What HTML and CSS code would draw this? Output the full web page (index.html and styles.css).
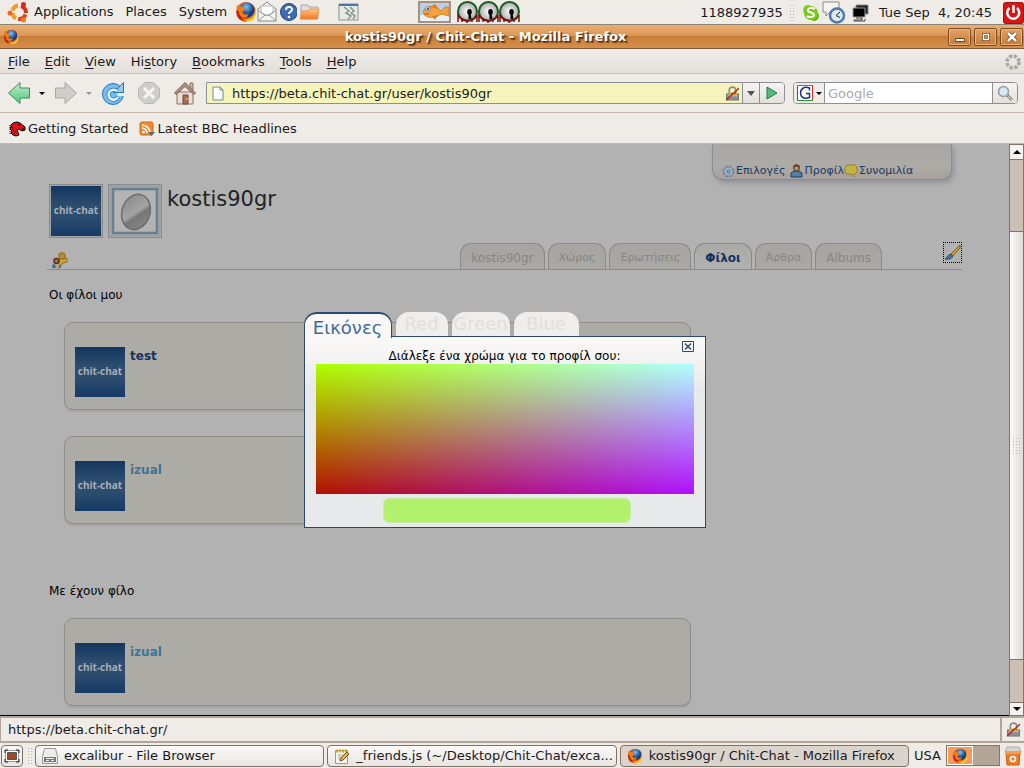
FILE: index.html
```html
<!DOCTYPE html>
<html lang="el">
<head>
<meta charset="utf-8">
<title>kostis90gr / Chit-Chat - Mozilla Firefox</title>
<link rel="stylesheet" href="styles.css">
</head>
<body>
<svg class="defs" aria-hidden="true">
  <defs>
    <radialGradient id="globe" cx="45%" cy="30%"><stop offset="0" stop-color="#7cc5f4"/><stop offset="1" stop-color="#123c85"/></radialGradient>
    <linearGradient id="fox" x1="0" y1="0" x2="1" y2="1"><stop offset="0" stop-color="#ef7a18"/><stop offset=".5" stop-color="#c8250b"/><stop offset="1" stop-color="#ffcc22"/></linearGradient>
    <linearGradient id="green" x1="0" y1="0" x2="0" y2="1"><stop offset="0" stop-color="#c4f0cf"/><stop offset="1" stop-color="#4fc57a"/></linearGradient>
    <linearGradient id="orange" x1="0" y1="0" x2="0" y2="1"><stop offset="0" stop-color="#ffc98c"/><stop offset="1" stop-color="#ef7417"/></linearGradient>
    <linearGradient id="mirror" x1="0" y1="0" x2="1" y2="1"><stop offset="0" stop-color="#858585"/><stop offset=".5" stop-color="#a4a4a4"/><stop offset=".6" stop-color="#777"/><stop offset="1" stop-color="#8d8d8d"/></linearGradient>
    <radialGradient id="eyeball"><stop offset="0" stop-color="#fff"/><stop offset="1" stop-color="#aaa"/></radialGradient>
  </defs>
  <symbol id="firefox" viewBox="0 0 22 22">
    <circle cx="11" cy="11" r="10" fill="url(#fox)"/>
    <circle cx="12" cy="9" r="7.500" fill="url(#globe)"/>
    <path d="M1.500 6 3 3.500 4.500 5.500 8 5.500 10 8.500 7.500 10.500 8.500 13 12 13.500 14 12 12 16 7 16.500 3 13z" fill="#ee7d17"/>
    <path d="M18 3C21 6 21 13 18 16c-3 3-8 4-12 1 3 4 10 5 13 1 3-4 3-11-1-15z" fill="#ffd02b"/>
    <path d="M2 9c0 6 4 11 10 11-5-1-8-5-8-9z" fill="#b61b0d"/>
  </symbol>
  <symbol id="lock" viewBox="0 0 14 14">
    <path d="M4 7V4a3 3 0 0 1 6 0v3" fill="none" stroke="#8b8b8b" stroke-width="1.500"/>
    <path d="M1.500 7.500h11v5.500h-11z" fill="#a3a6aa" stroke="#6c6f73"/>
    <path d="M4 6h7v3H4z" fill="#d8b93c"/><path d="M6 7h1m2 0h1" stroke="#222"/><path d="M2 10.500h10M2 12h10" stroke="#777b80" stroke-width=".7"/>
    <path d="M1 13 13 2" stroke="#bd1d1d" stroke-width="1.300"/>
  </symbol>
  <symbol id="eye" viewBox="0 0 21 22">
    <ellipse cx="10.500" cy="10.500" rx="9.500" ry="9.500" fill="url(#eyeball)" stroke="#1c5a24" stroke-width="2"/>
    <path d="M1 21v-7c3 5 6 5.500 9.500 5.500S18 18 20 14v7M5 17v4M10 19v3M15 18v3" fill="none" stroke="#7c1010" stroke-width="1.500"/>
    <ellipse cx="12.500" cy="11" rx="2.300" ry="3" fill="#000"/><path d="M11.500 12h2l1 6h-3z" fill="#000"/>
  </symbol>
</svg>

<nav class="panel" aria-label="Desktop">
  <svg class="ubuntu" viewBox="0 0 22 22" width="22" height="22">
    <g fill="none" stroke-width="4"><path d="M5.500 9.500A7 7 0 0 1 11 4.500" stroke="#f29b30"/><path d="M14 5a7 7 0 0 1 5 7" stroke="#d63218"/><path d="M18.500 13.500A7 7 0 0 1 11 18" stroke="#e2421c"/><path d="M9 17.500A7 7 0 0 1 5.500 12" stroke="#f4a02c"/></g>
    <circle cx="3" cy="12" r="2.500" fill="#ef6a1c"/><circle cx="16.500" cy="3.500" r="2.500" fill="#d62d1a"/><circle cx="16.500" cy="19" r="2.500" fill="#f07c20"/>
  </svg>
  <a href="#">Applications</a><a href="#">Places</a><a href="#">System</a>
  <div class="launchers">
    <svg width="22" height="22"><use href="#firefox"/></svg>
    <svg viewBox="0 0 20 22" width="20" height="22"><path d="M1 8 10 1l9 7v12H1z" fill="#f4f4f2" stroke="#888"/><path d="M4 5h12v7l-6 3-6-3z" fill="#fff" stroke="#bbb"/><path d="m1 20 7-6h4l7 6M1 9l7 5M19 9l-7 5" fill="none" stroke="#999"/></svg>
    <svg viewBox="0 0 20 20" width="20" height="20"><circle cx="12" cy="10" r="8.500" fill="#3d6db0" stroke="#25457d"/><path d="M9 8c0-4 6-4 6-.500 0 2-3 2-3 4.500" fill="none" stroke="#fff" stroke-width="2"/><circle cx="12" cy="15" r="1.300" fill="#fff"/></svg>
    <svg viewBox="0 0 24 20" width="24" height="20"><path d="M4 17V3h7l1 2h9v12z" fill="#ddd" stroke="#aaa"/><path d="M3 17 5 9h6l2-2h9l-2 10z" fill="url(#orange)" stroke="#e9964f"/></svg>
  </div>
  <svg class="torn" viewBox="0 0 21 18" width="21" height="18"><path d="M1 1h19v16H1z" fill="#e7ebe6" stroke="#8a918d"/><path d="M1 1h19v2H1z" fill="#4b76a8"/><path d="m6 4 5 4-3 2 5 3-3 3M12 4l4 4-3 2 4 3-2 3" fill="none" stroke="#8b8f8d" stroke-width="1.500"/></svg>
  <svg class="fish" viewBox="0 0 33 22" width="33" height="22"><path d="M1 1h31v20H1z" fill="#b8cff0" stroke="#a6937f" stroke-width="2"/><path d="M2 14h29v6H2z" fill="#e9f1fa"/><path d="M5 11c2-7 12-7 18-1l4-4h4l-1 4 1 5-8-2c-4 4-16 6-18-2z" fill="#f3a33d" stroke="#d98434"/><path d="m12 6 5-3 4 5zm2 9 3 4 3-5z" fill="#e57c22"/><circle cx="10" cy="8" r="2.300" fill="#fff" stroke="#777"/><circle cx="10" cy="8" r="1" fill="#222"/><path d="M6 13h5" stroke="#a55416"/></svg>
  <div class="eyes"><svg width="21" height="22"><use href="#eye"/></svg><svg width="21" height="22"><use href="#eye"/></svg><svg width="21" height="22"><use href="#eye"/></svg></div>
  <div class="tray">
    <span>1188927935</span><i class="grip"></i>
    <svg class="skype" viewBox="0 0 18 18" width="18" height="18"><circle cx="6" cy="6" r="5" fill="#83d01b"/><circle cx="12" cy="12" r="5" fill="#62b90c"/><circle cx="9" cy="9" r="7" fill="#78ca15"/><path d="M13 5c-3-2-8-1-7 2 1 2 6 1 6 4 0 2-5 3-7 1" fill="none" stroke="#fff" stroke-width="2"/></svg>
    <svg viewBox="0 0 24 23" width="24" height="23"><path d="M1 1h16v10H8l-4 4v-4H1z" fill="#f4f4f2" stroke="#888"/><circle cx="15" cy="14.500" r="7" fill="#dce9f7" stroke="#5377a8" stroke-width="2.500"/><path d="m18 11-4 3.500 4 2" fill="none" stroke="#222"/></svg>
    <svg class="screens" viewBox="0 0 17 18" width="17" height="18"><path d="M4 1h12v9H4z" fill="#222" stroke="#888"/><path d="M1 4h12v9H1z" fill="#000" stroke="#999"/><path d="M4 14h6v2H2v1h11v-2" stroke="#444" fill="none"/></svg>
    <span class="clock">Tue Sep&nbsp; 4, 20:45</span>
    <svg viewBox="0 0 21 22" width="21" height="22"><rect x=".5" y=".5" width="20" height="21" rx="2" fill="#d71515" stroke="#9c1414"/><path d="M6.500 6a6 6 0 1 0 7.500 0M10.500 3v8" fill="none" stroke="#fff" stroke-width="2.500"/></svg>
  </div>
</nav>

<header class="titlebar">
  <svg width="16" height="16"><use href="#firefox"/></svg>
  <h1>kostis90gr / Chit-Chat - Mozilla Firefox</h1>
  <div class="winbuttons">
    <button aria-label="Minimize"><svg viewBox="0 0 12 12" width="12" height="12"><path d="M1.500 7.500h9v3h-9z" fill="#fff" stroke="#713f16"/></svg></button>
    <button aria-label="Maximize"><svg viewBox="0 0 12 12" width="12" height="12"><path d="M3.500 3.500h5v5h-5z" fill="none" stroke="#713f16" stroke-width="3"/><path d="M3.500 3.500h5v5h-5z" fill="none" stroke="#fff" stroke-width="1.500"/></svg></button>
    <button aria-label="Close"><svg viewBox="0 0 12 12" width="12" height="12"><path d="m2 2 8 8m0-8-8 8" stroke="#713f16" stroke-width="4"/><path d="m2 2 8 8m0-8-8 8" stroke="#fff" stroke-width="2.500"/></svg></button>
  </div>
</header>

<nav class="menubar" aria-label="Menu">
  <a href="#"><u>F</u>ile</a><a href="#"><u>E</u>dit</a><a href="#"><u>V</u>iew</a><a href="#">Hi<u>s</u>tory</a><a href="#"><u>B</u>ookmarks</a><a href="#"><u>T</u>ools</a><a href="#"><u>H</u>elp</a>
  <svg class="throbber" viewBox="0 0 16 16" width="16" height="16"><circle cx="8" cy="8" r="6" fill="none" stroke="#aaa6a2" stroke-width="3.500" stroke-dasharray="3.200 1.512"/></svg>
</nav>

<div class="navbar">
  <button class="plain" aria-label="Back"><svg viewBox="0 0 24 24" width="24" height="24"><path d="M1.500 12 13 1.500V7h9.500v10H13v5.500z" fill="url(#green)" stroke="#3a8f5c"/></svg></button>
  <i class="caret"></i>
  <button class="plain fwd" aria-label="Forward"><svg viewBox="0 0 24 24" width="24" height="24"><path d="M22.500 12 11 1.500V7H1.500v10H11v5.500z" fill="#cfcdca" stroke="#aaa8a5"/></svg></button>
  <i class="caret dim"></i>
  <button class="plain reload" aria-label="Reload"><svg viewBox="0 0 24 24" width="24" height="24"><circle cx="12" cy="13" r="10.500" fill="#74bdf0" stroke="#2876b8"/><path d="M22.500 1.500v10H12.500z" fill="#8fcbf4" stroke="#2876b8"/><path d="M23 12h-7l1 3h6z" fill="#efebe7"/><path d="M16 10a5 5 0 1 0 1 6" fill="none" stroke="#2876b8" stroke-width="4"/><path d="M16 10a5 5 0 1 0 1 6" fill="none" stroke="#e6f4fd" stroke-width="2.500"/></svg></button>
  <button class="plain stop" aria-label="Stop"><svg viewBox="0 0 24 24" width="24" height="24"><path d="M7.500 1.500h9l6 6v9l-6 6h-9l-6-6v-9z" fill="#cfcdca" stroke="#b9b7b4"/><path d="m7 7 10 10m0-10L7 17" stroke="#f7f6f4" stroke-width="3"/></svg></button>
  <button class="plain home" aria-label="Home"><svg viewBox="0 0 24 24" width="24" height="24"><path d="M4 11h16v12H4z" fill="#ece0d6" stroke="#8a7363"/><path d="M17 2h3v7h-3z" fill="#c9b8ab" stroke="#8a7363"/><path d="M12 1.500 1.500 12l1.500 1.500 9-8 9 8 1.500-1.500z" fill="#b78f7e" stroke="#805e50"/><path d="M10 14h5v9h-5z" fill="#a9705c" stroke="#744636"/><circle cx="14" cy="18" r="1" fill="#e9c64d"/></svg></button>
  <form class="location">
    <svg viewBox="0 0 12 15" width="12" height="15"><path d="M1 1h7l3 3v10H1z" fill="#fff" stroke="#7486a0"/><path d="M8 1v3h3" fill="none" stroke="#7486a0"/></svg>
    <input type="text" aria-label="Location" value="https://beta.chit-chat.gr/user/kostis90gr">
    <svg width="15" height="15"><use href="#lock"/></svg>
    <button type="button" class="cell drop" aria-label="History list"><i class="caret grey"></i></button>
    <button type="button" class="cell go" aria-label="Go"><svg viewBox="0 0 14 14" width="14" height="14"><path d="M2 1v12l10-6z" fill="#55bd78" stroke="#24774a"/></svg></button>
  </form>
  <form class="search">
    <button type="button" class="engine" aria-label="Search engine"><svg viewBox="0 0 16 16" width="16" height="16"><path d="M0 0h16v16H0z" fill="#fff"/><path d="M.5 16V.5" stroke="#2a56c6"/><path d="M0 .5h16M0 15.500h16" stroke="#2a9b35"/><path d="M15.500 1v14" stroke="#d7291d"/><path d="M12.500 5.500V3C7 1 3.500 4 3.500 8s3 6.500 9 4.500V8.500H9" fill="none" stroke="#17328d" stroke-width="1.500"/></svg><i class="caret"></i></button>
    <input type="text" aria-label="Search" placeholder="Google">
    <button type="button" class="cell find" aria-label="Search"><svg viewBox="0 0 17 17" width="17" height="17"><path d="m9 9 6 6" stroke="#888" stroke-width="3"/><path d="m10 10 5 5" stroke="#ddd"/><circle cx="6.500" cy="6.500" r="5" fill="#d4e8f6" stroke="#999" stroke-width="1.500"/></svg></button>
  </form>
</div>

<nav class="bookmarks" aria-label="Bookmarks">
  <a href="#"><svg viewBox="0 0 17 16" width="17" height="16"><path d="m2 4 2-2 4-1 3 1 5 4v3l-3 1-3-2-2 1 2 5-3 1-3-1-2-2 1-2-2-2 1-2z" fill="#e01414" stroke="#000"/><path d="M1 4v9M3 6l3 6" stroke="#000" stroke-dasharray="1 1"/><path d="M9 4h2M13 8h2" stroke="#000"/></svg>Getting Started</a>
  <a href="#"><svg viewBox="0 0 17 16" width="17" height="16"><rect x="1" y="1" width="13" height="13" rx="2" fill="#ee8c32" stroke="#cf6b19"/><circle cx="4.500" cy="11" r="1.300" fill="#fff"/><path d="M3 7a5 5 0 0 1 5 5M3 4a8 8 0 0 1 8 8" fill="none" stroke="#fff" stroke-width="1.500"/><path d="M9 11h7l-3.500 4z" fill="#666"/></svg>Latest BBC Headlines</a>
</nav>

<div class="viewport">
  <main class="page">
    <nav class="usermenu" aria-label="Χρήστης">
      <a href="#"><svg viewBox="0 0 13 13" width="13" height="13"><circle cx="6.500" cy="6.500" r="5.500" fill="#93a9bf" stroke="#5b7591" stroke-dasharray="2.600 1.720"/><circle cx="6.500" cy="6.500" r="4.500" fill="#9fb2c4" stroke="#6f89a4"/><circle cx="6.500" cy="6.500" r="1.500" fill="#aaa" stroke="#4c6a8c"/></svg>Επιλογές</a>
      <a href="#"><svg viewBox="0 0 13 14" width="13" height="14"><path d="M1 13V9l3-2h5l3 2v4z" fill="#537fa8" stroke="#1f4267"/><circle cx="6.500" cy="4" r="3" fill="#b49068" stroke="#5b3218"/><path d="M3 4c0-5 7-5 7 0-2-2-5-2-7 0z" fill="#6b3a19"/></svg>Προφίλ</a>
      <a href="#"><svg viewBox="0 0 14 14" width="14" height="14"><path d="M3 1h8l2 2v5l-2 2h-1v3L7 10H3L1 8V3z" fill="#c3b344" stroke="#9a7f22"/></svg>Συνομιλία</a>
    </nav>
    <header class="profile">
      <span class="frame"><span class="avatar">chit-chat</span></span>
      <span class="frame"><svg viewBox="0 0 50 50" width="50" height="50"><path d="M0 0h50v50H0z" fill="#97a0a6"/><path d="M2 2h46v46H2z" fill="#6d7f8b"/><path d="M4 4h42v42H4z" fill="#98a5ae"/><path d="M5 5h40v40H5z" fill="#b3b3b3"/><ellipse cx="26" cy="26" rx="14" ry="18" transform="rotate(18 26 26)" fill="url(#mirror)" stroke="#6c6c6c" stroke-width="1.500"/></svg></span>
      <h2>kostis90gr</h2>
    </header>
    <div class="tabrow">
      <svg class="friendsicon" viewBox="0 0 17 17" width="17" height="17"><circle cx="11" cy="4" r="3" fill="#b08f50" stroke="#a77412" stroke-width="1.500"/><path d="M6 9l3-2h4l3-1v4l-4 1-4 5H6z" fill="#c9a436" stroke="#94702a"/><circle cx="5.500" cy="9" r="2.500" fill="#9e7754" stroke="#553217" stroke-width="1.500"/><path d="M1 16v-3l3-1h3l3 1v3z" fill="#3d719f"/><path d="M4 12h4v4H5z" fill="#b8a37d"/></svg>
      <nav class="tabs" aria-label="Προφίλ">
        <a href="#">kostis90gr</a><a href="#">Χώρος</a><a href="#">Ερωτήσεις</a><a href="#" class="current">Φίλοι</a><a href="#">Άρθρα</a><a href="#">Albums</a>
      </nav>
      <button class="brush" aria-label="Χρώματα"><svg viewBox="0 0 17 19" width="17" height="19"><path d="m7 11 9-9v3l-7 8z" fill="#c5a044" stroke="#80601f"/><path d="M1 16c2-1 2-4 6-5l2 2c-1 3-5 4-8 3z" fill="#4d6f92" stroke="#3a5572"/></svg></button>
    </div>
    <section>
      <h3>Οι φίλοι μου</h3>
      <article class="card"><span class="avatar">chit-chat</span><a class="strong" href="#">test</a></article>
      <article class="card"><span class="avatar">chit-chat</span><a href="#">izual</a></article>
    </section>
    <section class="followers">
      <h3>Με έχουν φίλο</h3>
      <article class="card"><span class="avatar">chit-chat</span><a href="#">izual</a></article>
    </section>

    <div class="overlay">
      <div class="dialog" role="dialog" aria-label="Χρώμα προφίλ">
        <div class="dtabs">
          <button class="on">Εικόνες</button><button class="red">Red</button><button class="green">Green</button><button class="blue">Blue</button>
        </div>
        <div class="dbody">
          <button class="close" aria-label="Κλείσιμο"><svg viewBox="0 0 12 11" width="12" height="11"><path d="M.5.5h11v10H.5z" fill="#fff" stroke="#2c4a70"/><path d="m3 2.500 6 6m0-6-6 6" stroke="#2c4a70" stroke-width="1.500"/></svg></button>
          <p>Διάλεξε ένα χρώμα για το προφίλ σου:</p>
          <div class="picker"></div>
          <div class="swatch"></div>
        </div>
      </div>
    </div>
  </main>
  <div class="scrollbar" aria-hidden="true">
    <span class="arrow"><i class="caret up"></i></span>
    <span class="track upper"></span>
    <span class="thumb"><i class="grip"></i></span>
    <span class="track lower"></span>
    <span class="arrow last"><i class="caret down"></i></span>
  </div>
</div>

<footer class="status"><span class="link">https://beta.chit-chat.gr/</span><span class="secure"><svg width="15" height="15"><use href="#lock"/></svg></span></footer>

<nav class="taskbar" aria-label="Tasks">
  <button class="desk" aria-label="Show desktop"><svg viewBox="0 0 16 14" width="16" height="14"><path d="M1.500 1.500h13v11h-13z" fill="#fff" stroke="#999"/><path d="M1 4V1h3M12 1h3v3M15 10v3h-3M4 13H1v-3" fill="none" stroke="#222"/><path d="M3.500 3.500h9v7h-9z" fill="#9b4a25" stroke="#555"/></svg></button>
  <i class="grip"></i>
  <button class="task"><svg viewBox="0 0 16 16" width="16" height="16"><path d="M2.500.5h11l2 8v7H.5v-7z" fill="#ececea" stroke="#999"/><path d="M2 9h12v5H2z" fill="#777"/><path d="M4 10.500h8M4 12.500h3m2 0h3" stroke="#eee"/></svg><span>excalibur - File Browser</span></button>
  <button class="task"><svg viewBox="0 0 16 16" width="16" height="16"><path d="M1.500 2.500h12v13h-12z" fill="#f5f5ee" stroke="#999"/><path d="M2 3h11" stroke="#d1a70d" stroke-width="3" stroke-dasharray="2 1"/><path d="M4 7h7M4 9h5M4 11h4" stroke="#aaa"/><path d="m6 13 1-3 6-6 2 2-6 6z" fill="#efae42" stroke="#7c5424"/></svg><span>_friends.js (~/Desktop/Chit-Chat/exca...</span></button>
  <button class="task active"><svg width="16" height="16"><use href="#firefox"/></svg><span>kostis90gr / Chit-Chat - Mozilla Firefox</span></button>
  <span class="layout">USA</span>
  <div class="spaces"><span class="space here"><svg width="16" height="16"><use href="#firefox"/></svg></span><span class="space"></span></div>
  <svg class="trash" viewBox="0 0 18 20" width="18" height="20"><path d="M2 6h14l-1 13H3z" fill="#ee7b2b" stroke="#c95a16"/><path d="M3 1h12l2 5H1z" fill="#d7d4cf" stroke="#aaa"/><path d="M1 5h16v3H1z" fill="#f39a55"/><circle cx="9" cy="13" r="2.500" fill="none" stroke="#fff" stroke-width="1.500"/></svg>
</nav>
</body>
</html>
```

FILE: styles.css
```css
* { box-sizing: border-box; }
body {
  margin: 0;
  height: 100vh;
  display: flex;
  flex-direction: column;
  overflow: hidden;
  background: #efebe7;
  color: #1a1a1a;
  font: 13px/16px "DejaVu Sans", sans-serif;
}
.defs { position: absolute; width: 0; height: 0; }
svg { display: block; flex: none; }
a { color: inherit; text-decoration: none; }
button, input { font: inherit; color: inherit; padding: 0; margin: 0; border: 0; background: none; }
h1, h2, h3, p { margin: 0; font: inherit; }
form { margin: 0; }

.grip {
  flex: none;
  width: 5px;
  height: 17px;
  background: radial-gradient(circle, #bdb7b0 1px, transparent 1px) 0 0 / 3px 3px;
}
.caret {
  flex: none;
  width: 0;
  height: 0;
  border: 3px solid transparent;
  border-top-color: #000;
  border-bottom: 0;
}
.caret.dim { border-top-color: #999; }
.caret.grey { border-width: 5px 4px 0; border-top-color: #555; }
.caret.down { border-width: 4px 4px 0; }
.caret.up { border: 4px solid transparent; border-bottom-color: #000; border-top: 0; }

/* Desktop panel */
.panel {
  flex: none;
  display: flex;
  align-items: center;
  gap: 12px;
  height: 25px;
  padding-left: 7px;
  border-bottom: 1px solid #8c8478;
}
.panel .ubuntu { margin-right: -7px; }
.launchers { display: flex; align-items: center; margin-left: -4px; }
.torn { margin-left: 5px; }
.fish { margin-left: 47px; }
.eyes { display: flex; margin-left: -6px; }
.tray { display: flex; align-items: center; margin-left: auto; padding-top: 1px; }
.tray .grip { margin: 0 8px 0 6px; }
.tray .skype { margin-right: 2px; }
.tray .screens { margin-left: 6px; }
.clock { margin: 0 11px 0 10px; }

/* Window title */
.titlebar {
  flex: none;
  display: flex;
  align-items: center;
  height: 24px;
  padding: 0 1px 0 3px;
  background: linear-gradient(#e9ae70, #dc9857 45%, #c67e38 50%, #d68f4a);
  border-bottom: 1px solid #7d5a3a;
}
.titlebar h1 {
  flex: 1;
  margin-left: 4px;
  text-align: center;
  font-weight: bold;
  color: #fff;
  text-shadow: 1px 1px 1px #4a2c10, 2px 2px 1px #7a4a20;
}
.winbuttons { display: flex; gap: 3px; }
.winbuttons button {
  display: grid;
  place-items: center;
  width: 23px;
  height: 18px;
  background: linear-gradient(#e2a267, #c67c38);
  border: 1px solid #7a4a20;
  border-radius: 2px;
  box-shadow: inset 0 0 0 1px #e8b482;
}

/* Menus */
.menubar {
  flex: none;
  display: flex;
  align-items: center;
  gap: 15px;
  height: 25px;
  padding: 2px 3px 0 8px;
  background: linear-gradient(#efebe7, #e4dfda);
  border-bottom: 1px solid #c8beb6;
}
.menubar u { text-underline-offset: 2px; }
.throbber { margin-left: auto; }

/* Navigation */
.navbar {
  flex: none;
  display: flex;
  align-items: center;
  height: 39px;
  padding: 0 6px 0 7px;
  border-bottom: 1px solid #c8b8a9;
}
.navbar > .caret { margin-left: 8px; }
.fwd { margin-left: 9px; }
.reload { margin-left: 9px; }
.stop { margin-left: 12px; }
.home { margin-left: 12px; }
.location, .search {
  display: flex;
  align-items: center;
  height: 22px;
  border: 1px solid #8e8e96;
  border-radius: 0 4px 4px 0;
  overflow: hidden;
}
.location { flex: 1; margin-left: 9px; padding-left: 5px; background: #f5f5bb; }
.location input { flex: 1; min-width: 0; margin-left: 8px; padding-top: 2px; }
.cell {
  display: grid;
  place-items: center;
  height: 20px;
  border-left: 1px solid #8e8e96;
  background: linear-gradient(#f6f4f2, #e4dfda);
}
.drop { width: 17px; margin-left: 2px; }
.go { width: 25px; }
.search { width: 225px; margin-left: 8px; background: #fff; border-radius: 4px; }
.engine {
  display: flex;
  align-items: center;
  gap: 3px;
  width: 31px;
  height: 20px;
  padding-left: 3px;
  background: #efebe7;
  border-right: 1px solid #8e8e96;
}
.search input { flex: 1; min-width: 0; padding: 2px 0 0 3px; }
.search input::placeholder { color: #aaa; opacity: 1; }
.find { width: 25px; }

.bookmarks {
  flex: none;
  display: flex;
  align-items: center;
  gap: 10px;
  height: 31px;
  padding: 1px 0 0 9px;
  border-bottom: 1px solid #c0b8b0;
}
.bookmarks a { display: flex; align-items: center; gap: 2px; }

/* Web page */
.viewport { flex: 1; display: flex; min-height: 0; }
.page {
  position: relative;
  flex: 1;
  overflow: hidden;
  padding: 0 47px;
  background: #b2b2b2;
  border-bottom: 1px solid #000;
  font-size: 12px;
}
.usermenu {
  display: flex;
  align-items: flex-end;
  width: 240px;
  height: 36px;
  margin: 0 10px 4px auto;
  padding-left: 9px;
  background: linear-gradient(#a9a7a3, #aeaba7 60%, #a8a19e);
  border: 1px solid #8c8c8c;
  border-top: 0;
  border-radius: 0 0 11px 11px;
  box-shadow: 2px 3px 5px #8f9297;
  color: #173a66;
  font-size: 11px;
}
.usermenu a { display: flex; align-items: center; gap: 1px; }
.usermenu a:nth-child(2) { margin-left: 5px; }
.profile { display: flex; gap: 5px; padding-left: 2px; }
.frame { padding: 1px; border: 1px solid #8b8b8b; background: #a5a5a5; }
.avatar {
  flex: none;
  display: grid;
  place-items: center;
  width: 50px;
  height: 50px;
  padding-bottom: 2px;
  background: linear-gradient(#14355f, #2c4d6e 38%, #2c4d6e 62%, #163a66);
  color: #a7afb8;
  font: bold 10px/16px "Open Sans", sans-serif;
}
.profile .frame { width: 54px; height: 54px; }
.profile h2 { font-size: 21px; line-height: 30px; color: #222; }
.tabrow { display: flex; align-items: flex-end; height: 32px; border-bottom: 1px solid #8c8c8c; }
.friendsicon { margin-left: 4px; }
.tabs { display: flex; gap: 3px; margin-left: auto; }
.tabs a {
  display: flex;
  align-items: center;
  height: 26px;
  padding: 3px 10px 0;
  background: linear-gradient(#a6a5a2, #a9a8a4);
  border: 1px solid #8a8a8a;
  border-bottom: 0;
  border-radius: 11px 11px 0 0;
  color: #868686;
  font-size: 11px;
}
.tabs a:first-child, .tabs a:last-child { font-size: 12px; }
.tabs .current {
  margin-bottom: -1px;
  background: linear-gradient(#aaa9a5, #b2b2b2);
  color: #12325d;
  font-size: 12px;
  font-weight: bold;
}
.brush {
  width: 19px;
  height: 21px;
  margin: 0 0 6px 61px;
  border: 1px dotted #000;
}
.page h3 { padding: 17px 2px 0; color: #000; }
.card {
  display: flex;
  gap: 5px;
  width: 627px;
  height: 88px;
  margin: 19px 0 0 17px;
  padding: 24px 10px 0;
  background: #adaba6;
  border: 1px solid #8d8d8b;
  border-radius: 9px;
  box-shadow: 0 2px 1px #a3a3a3;
  color: #3f7590;
  font-weight: bold;
  line-height: 18px;
}
.card + .card { margin-top: 26px; }
.card .strong { color: #12325d; }
.followers { padding-top: 42px; }

/* Colour chooser */
.overlay { position: absolute; inset: 168px 0 auto; display: flex; justify-content: center; }
.dialog { width: 402px; }
.dtabs { display: flex; gap: 4px; align-items: flex-start; }
.dtabs button {
  height: 24px;
  background: #efeeec;
  border-radius: 13px 13px 0 0;
  color: #dfdfdf;
  font-size: 18px;
  line-height: 24px;
}
.dtabs .on {
  position: relative;
  z-index: 1;
  width: 88px;
  height: 26px;
  margin-bottom: -1px;
  padding-top: 2px;
  background: #f9f8f6;
  border: 1px solid #2c4a70;
  border-top-width: 2px;
  border-bottom: 0;
  color: #416a9c;
}
.dtabs .red { width: 52px; }
.dtabs .green { width: 58px; }
.dtabs .blue { width: 65px; }
.dbody {
  position: relative;
  padding: 12px 11px 4px;
  background: linear-gradient(#fbfaf8, #e8e9ec 28%, #e8e9eb);
  border: 1px solid #2c4a70;
  margin-top: -1px;
}
.close { position: absolute; top: 4px; right: 11px; }
.dbody p { color: #000; text-align: center; line-height: 15px; }
.picker {
  height: 130px;
  background:
    linear-gradient(to right, rgb(176, 0, 0), rgb(176, 0, 255)),
    linear-gradient(rgb(0, 255, 0), rgb(0, 16, 0));
  background-blend-mode: screen;
}
.swatch {
  width: 248px;
  height: 25px;
  margin: 4px auto 0 67px;
  background: #b2f16b;
  border: 1px solid #c6eea0;
  border-radius: 6px;
}

/* Scrollbar */
.scrollbar { flex: none; display: flex; flex-direction: column; width: 15px; border: 1px solid #837468; }
.arrow { flex: none; display: grid; place-items: center; height: 14px; background: #f5f2ef; }
.arrow.last { height: 12px; }
.track { background: #cdbfb4; border: solid #837468; border-width: 1px 0; }
.upper { flex: 0 0 73px; }
.lower { flex: 0 0 44px; }
.thumb {
  flex: 1;
  display: grid;
  place-items: center;
  background: linear-gradient(to right, #fbfaf9, #e1dbd5);
}
.thumb .grip { width: 9px; }

/* Status line */
.status { flex: none; display: flex; height: 27px; border: solid #b3a597; border-width: 2px 0 2px 1px; }
.link { flex: 1; padding: 4px 7px; border-right: 2px solid #b3a597; }
.secure { display: grid; place-items: center; width: 22px; }

/* Task list */
.taskbar {
  flex: none;
  display: flex;
  align-items: center;
  gap: 3px;
  height: 25px;
  padding: 0 2px 0 1px;
}
.desk, .task {
  height: 22px;
  background: linear-gradient(#fbfaf9, #e9e5e1);
  border: 1px solid #7d7269;
  border-radius: 4px;
}
.desk { display: grid; place-items: center; width: 22px; margin-right: 1px; }
.task {
  flex: 1;
  min-width: 0;
  display: flex;
  align-items: center;
  gap: 6px;
  padding: 1px 0 0 6px;
  text-align: left;
}
.task span { overflow: hidden; text-overflow: ellipsis; white-space: nowrap; }
.task.active { background: #dad4cd; }
.layout { margin: 0 2px; }
.spaces { display: flex; height: 21px; background: #b3a597; border: 1px solid #8c7460; }
.space { display: grid; place-items: center; width: 26px; }
.here { background: #f59b5b; border: 1px solid #fff; }
.trash { margin-left: 1px; }
```
